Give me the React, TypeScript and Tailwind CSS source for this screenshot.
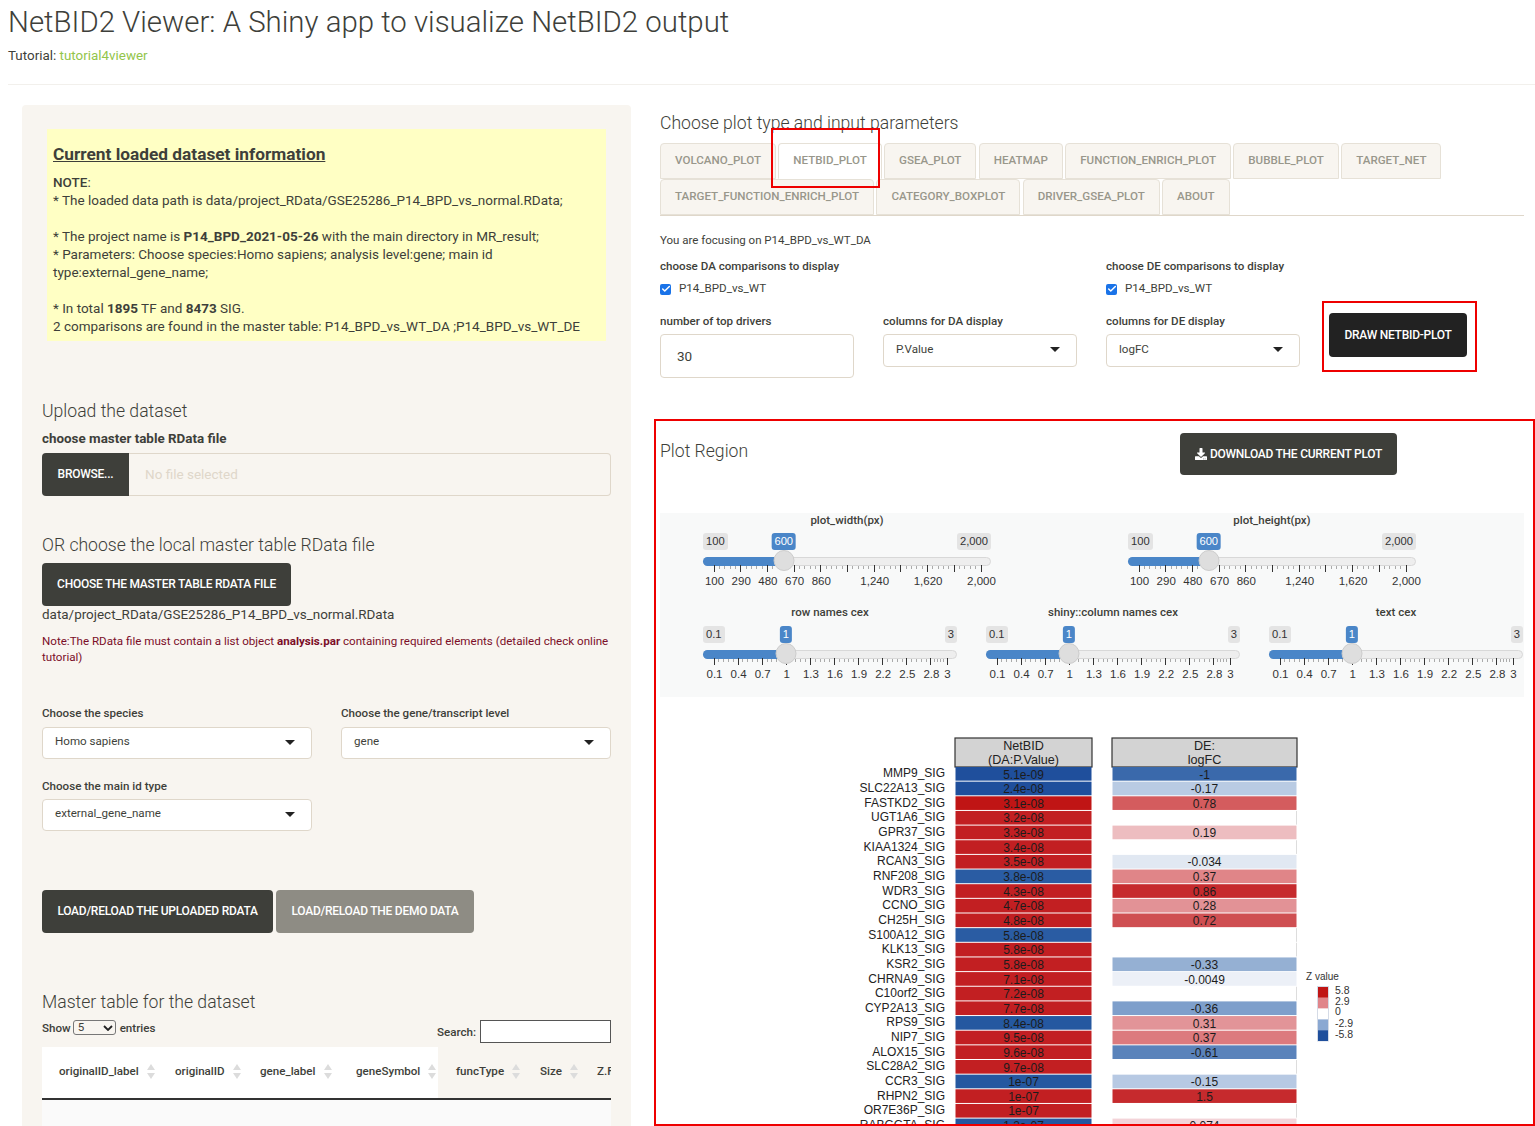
import { FaDownload } from 'react-icons/fa';
import { Check } from 'lucide-react';

const TABS = [
  'VOLCANO_PLOT', 'NETBID_PLOT', 'GSEA_PLOT', 'HEATMAP', 'FUNCTION_ENRICH_PLOT', 'BUBBLE_PLOT', 'TARGET_NET',
  'TARGET_FUNCTION_ENRICH_PLOT', 'CATEGORY_BOXPLOT', 'DRIVER_GSEA_PLOT', 'ABOUT',
];

const COLUMNS = [
  { name: 'originalID_label', w: 116 },
  { name: 'originalID', w: 85 },
  { name: 'gene_label', w: 96 },
  { name: 'geneSymbol', w: 100 },
  { name: 'funcType', w: 84 },
  { name: 'Size', w: 57 },
  { name: 'Z.FDR', w: 60 },
];

const BLUE = '#1f4f9c';
const RED = '#c21f22';

const ROWS: [string, string, string, string, string][] = [
  ['MMP9_SIG', '5.1e-09', BLUE, '-1', '#3a69ab'],
  ['SLC22A13_SIG', '2.4e-08', BLUE, '-0.17', '#b9cbe3'],
  ['FASTKD2_SIG', '3.1e-08', '#c01515', '0.78', '#d45c5e'],
  ['UGT1A6_SIG', '3.2e-08', RED, '', '#ffffff'],
  ['GPR37_SIG', '3.3e-08', RED, '0.19', '#edbdc0'],
  ['KIAA1324_SIG', '3.4e-08', RED, '', '#ffffff'],
  ['RCAN3_SIG', '3.5e-08', RED, '-0.034', '#e1e8f2'],
  ['RNF208_SIG', '3.8e-08', '#2a5ca3', '0.37', '#e08588'],
  ['WDR3_SIG', '4.3e-08', RED, '0.86', '#c62a2d'],
  ['CCNO_SIG', '4.7e-08', RED, '0.28', '#e29296'],
  ['CH25H_SIG', '4.8e-08', RED, '0.72', '#cf4f52'],
  ['S100A12_SIG', '5.8e-08', '#2a5ca3', '', '#ffffff'],
  ['KLK13_SIG', '5.8e-08', RED, '', '#ffffff'],
  ['KSR2_SIG', '5.8e-08', RED, '-0.33', '#95b0d3'],
  ['CHRNA9_SIG', '7.1e-08', RED, '-0.0049', '#ecf0f7'],
  ['C10orf2_SIG', '7.2e-08', RED, '', '#ffffff'],
  ['CYP2A13_SIG', '7.7e-08', RED, '-0.36', '#7e9fcb'],
  ['RPS9_SIG', '8.4e-08', '#2558a0', '0.31', '#e29498'],
  ['NIP7_SIG', '9.5e-08', RED, '0.37', '#dc7a7e'],
  ['ALOX15_SIG', '9.6e-08', RED, '-0.61', '#5a83bb'],
  ['SLC28A2_SIG', '9.7e-08', RED, '', '#ffffff'],
  ['CCR3_SIG', '1e-07', '#2558a0', '-0.15', '#b7c9e3'],
  ['RHPN2_SIG', '1e-07', RED, '1.5', '#c62a2d'],
  ['OR7E36P_SIG', '1e-07', RED, '', '#ffffff'],
  ['RABGGTA_SIG', '1.2e-07', '#2558a0', '0.074', '#f3d3d8'],
];

const LEGEND: [string, string, number][] = [
  ['#c01515', '5.8', 991],
  ['#e0858a', '2.9', 1002],
  ['#ffffff', '0', 1012],
  ['#8aa8d2', '-2.9', 1024],
  ['#1f4f9c', '-5.8', 1035],
];

function Caret() {
  return <span className="w-0 h-0 border-x-[5px] border-x-transparent border-t-[5px] border-t-[#222]" />;
}

function Select({ value, className }: { value: string; className: string }) {
  return (
    <div className={`flex items-center justify-between pl-[12px] pr-[16px] pb-[2px] bg-white border border-[#dfd7ca] rounded text-[11.6px] text-[#3e3f3a] ${className}`}>
      <span>{value}</span>
      <Caret />
    </div>
  );
}

function DarkButton({ label, className }: { label: string; className: string }) {
  return (
    <div className={`flex items-center justify-center rounded text-white text-[12px] font-medium tracking-[-0.25px] pb-px ${className}`}>
      {label}
    </div>
  );
}

function Tick({ pct, label, major }: { pct: number; label?: string; major: boolean }) {
  return (
    <>
      <span
        className={`absolute w-px ${major ? 'top-[32px] h-[7px] bg-[#333]' : 'top-[33px] h-[3px] bg-[#aaa]'}`}
        style={{ left: pct }}
      />
      {label && (
        <span className="absolute top-[42px] ml-px h-[12px] leading-[12px] -translate-x-1/2 text-[11.5px] text-[#333]" style={{ left: pct }}>
          {label}
        </span>
      )}
    </>
  );
}

function Slider({ width, min, max, value, valueLabel, minLabel, maxLabel, marks }: {
  width: number; min: number; max: number; value: number; valueLabel: string;
  minLabel: string; maxLabel: string; marks: { v: number; label?: string }[];
}) {
  const inner = width - 21;
  const pos = (v: number) => 10.5 + ((v - min) / (max - min)) * inner;
  const minors: number[] = [];
  marks.forEach((m, i) => {
    const next = marks[i + 1];
    if (!next) return;
    for (let k = 1; k < 5; k++) minors.push(pos(m.v) + ((pos(next.v) - pos(m.v)) * k) / 5);
  });
  return (
    <div className="relative h-[60px] [font-family:'Liberation_Sans',sans-serif]" style={{ width }}>
      <span className="absolute left-0 top-0 h-[17px] leading-[17px] px-[3px] rounded-[3px] bg-[#e4e4e4] text-[11.2px] text-[#333]">{minLabel}</span>
      <span className="absolute right-0 top-0 h-[17px] leading-[17px] px-[3px] rounded-[3px] bg-[#e4e4e4] text-[11.2px] text-[#333]">{maxLabel}</span>
      <span className="absolute top-0 h-[17px] leading-[17px] px-[3px] rounded-[3px] bg-[#4a86c8] text-[11.2px] text-white -translate-x-1/2" style={{ left: pos(value) }}>{valueLabel}</span>
      <div className="absolute left-0 right-0 top-[24px] h-[9px] rounded-full bg-[#eeeeee] border border-[#d8d8d8]" />
      <div className="absolute left-0 top-[24px] h-[9px] rounded-l-full bg-[#4a86c8]" style={{ width: pos(value) }} />
      {minors.map((p, i) => <Tick key={i} pct={p} major={false} />)}
      {marks.map(m => <Tick key={m.v} pct={pos(m.v)} label={m.label} major />)}
      <div className="absolute top-[17px] w-[21px] h-[21px] -translate-x-1/2 rounded-full bg-[#dedede] border border-[#cccccc]" style={{ left: pos(value) }} />
    </div>
  );
}

const PX_MARKS = [
  { v: 100, label: '100' }, { v: 290, label: '290' }, { v: 480, label: '480' }, { v: 670, label: '670' },
  { v: 860, label: '860' }, { v: 1050 }, { v: 1240, label: '1,240' }, { v: 1430 }, { v: 1620, label: '1,620' },
  { v: 1810 }, { v: 2000, label: '2,000' },
];

const CEX_MARKS = [0.1, 0.4, 0.7, 1, 1.3, 1.6, 1.9, 2.2, 2.5, 2.8, 3].map(v => ({ v, label: String(v) }));

function PxSlider({ title }: { title: string }) {
  return (
    <div className="w-[288px]">
      <div className="h-[14px] leading-[14px] text-center text-[11.5px] font-medium text-[#3e3f3a] mb-[6px]">{title}</div>
      <Slider width={288} min={100} max={2000} value={600} valueLabel="600" minLabel="100" maxLabel="2,000" marks={PX_MARKS} />
    </div>
  );
}

function CexSlider({ title }: { title: string }) {
  return (
    <div className="w-[254px]">
      <div className="h-[14px] leading-[14px] text-center text-[11.5px] font-medium text-[#3e3f3a] mb-[7px]">{title}</div>
      <Slider width={254} min={0.1} max={3} value={1} valueLabel="1" minLabel="0.1" maxLabel="3" marks={CEX_MARKS} />
    </div>
  );
}

function Checkbox({ label }: { label: string }) {
  return (
    <div className="mt-[6px] h-[18px] flex items-center gap-[8px] text-[11.6px] text-[#3e3f3a]">
      <span className="w-[11px] h-[11px] rounded-[2px] bg-[#1a73e8] flex items-center justify-center">
        <Check size={10} strokeWidth={3.5} color="white" />
      </span>
      {label}
    </div>
  );
}

function SortArrows() {
  return (
    <svg width="8" height="15" viewBox="0 0 8 15" className="shrink-0">
      <path d="M4 0L8 6H0Z" fill="#dcdcdc" />
      <path d="M4 15L8 9H0Z" fill="#dcdcdc" />
    </svg>
  );
}

function Heatmap() {
  const pitch = 14.65;
  const top = 767;
  return (
    <svg
      width="864"
      height="429"
      viewBox="660 697 864 429"
      className="block [font-family:'Liberation_Sans',sans-serif]"
    >
      <rect x="955" y="738" width="137" height="29" fill="#d3d3d3" stroke="#333" strokeWidth="1.2" />
      <text x="1023.5" y="750" textAnchor="middle" fontSize="12.6" fill="#222">NetBID</text>
      <text x="1023.5" y="764" textAnchor="middle" fontSize="12.6" fill="#222">(DA:P.Value)</text>
      <rect x="1112" y="738" width="185" height="29" fill="#d3d3d3" stroke="#333" strokeWidth="1.2" />
      <text x="1204.5" y="750" textAnchor="middle" fontSize="12.6" fill="#222">DE:</text>
      <text x="1204.5" y="764" textAnchor="middle" fontSize="12.6" fill="#222">logFC</text>
      {ROWS.map((r, i) => {
        const y = top + i * pitch;
        return (
          <g key={r[0]}>
            <text x="945" y={y + 10.4} textAnchor="end" fontSize="12" fill="#222">{r[0]}</text>
            <rect x="955.5" y={y} width="136" height={pitch - 1} fill={r[2]} />
            <text x="1023.5" y={y + 11.5} textAnchor="middle" fontSize="12" fill="#1c1c1c">{r[1]}</text>
            <rect x="1112.5" y={y} width="184" height={pitch - 1} fill={r[4]} />
            {!r[3] && <rect x="1296" y={y} width="1" height={pitch - 1} fill="#dddddd" />}
            {r[3] && <text x="1204.5" y={y + 11.5} textAnchor="middle" fontSize="12" fill="#1c1c1c">{r[3]}</text>}
          </g>
        );
      })}
      <text x="1306" y="980" fontSize="10" fill="#333">Z value</text>
      <rect x="1317.5" y="986.5" width="11" height="54.5" fill="none" stroke="#d5dbe6" />
      {LEGEND.map((l, i) => (
        <g key={l[1]}>
          <rect x="1318" y={987 + i * 10.8} width="10" height="10.8" fill={l[0]} />
          <text x="1335" y={l[2]} fontSize="10.5" dominantBaseline="middle" fill="#333">{l[1]}</text>
        </g>
      ))}
    </svg>
  );
}

export default function App() {
  return (
    <div className="relative h-[1126px] overflow-hidden bg-white [font-family:Roboto,sans-serif] text-[#3e3f3a]">
      <header className="pl-2">
        <h1 className="h-[44px] leading-[44px] text-[29.4px] font-light">NetBID2 Viewer: A Shiny app to visualize NetBID2 output</h1>
        <p className="mt-[3px] h-[18px] leading-[18px] text-[13.4px]">
          Tutorial: <span className="text-[#93c54b]">tutorial4viewer</span>
        </p>
        <div className="mt-[19px] h-px bg-[#f2f0ec]" />
      </header>

      <main className="flex mt-[20px] ml-[22px] gap-[29px] items-start">
        {/* left panel */}
        <aside className="w-[609px] h-[1040px] shrink-0 rounded bg-[#f8f5f0] pt-[24px] px-[20px] overflow-hidden">
          <div className="ml-[5px] w-[559px] h-[212px] bg-[#ffffc4] pl-[6px] pt-[14px] text-[13.5px] leading-[18px]">
            <h3 className="h-[22px] leading-[22px] text-[17.3px] font-bold underline">Current loaded dataset information</h3>
            <p className="mt-[8px]">
              <b className="font-medium">NOTE</b>:<br />
              * The loaded data path is data/project_RData/GSE25286_P14_BPD_vs_normal.RData;<br /><br />
              * The project name is <b className="font-bold">P14_BPD_2021-05-26</b> with the main directory in MR_result;<br />
              * Parameters: Choose species:Homo sapiens; analysis level:gene; main id<br />
              type:external_gene_name;<br /><br />
              * In total <b className="font-bold">1895</b> TF and <b className="font-bold">8473</b> SIG.<br />
              2 comparisons are found in the master table: P14_BPD_vs_WT_DA ;P14_BPD_vs_WT_DE
            </p>
          </div>

          <h4 className="mt-[58px] h-[22px] leading-[24px] text-[17.6px] font-light">Upload the dataset</h4>
          <div className="mt-[8px] h-[18px] leading-[20px] text-[13.4px] font-bold">choose master table RData file</div>
          <div className="mt-[6px] h-[43px] flex">
            <DarkButton label="BROWSE..." className="w-[87px] h-[43px] bg-[#3e3f3a] rounded-r-none" />
            <div className="flex-1 border border-l-0 border-[#dfd7ca] rounded-r flex items-center pl-[16px] text-[13.5px] text-[#dfd7ca]">No file selected</div>
          </div>

          <h4 className="mt-[37px] h-[22px] leading-[24px] text-[17.6px] font-light">OR choose the local master table RData file</h4>
          <DarkButton label="CHOOSE THE MASTER TABLE RDATA FILE" className="mt-[8px] w-[249px] h-[43px] bg-[#3e3f3a]" />
          <div className="h-[18px] leading-[18px] text-[13.45px]">data/project_RData/GSE25286_P14_BPD_vs_normal.RData</div>
          <p className="mt-[9px] text-[11.6px] leading-[16px] text-[#7b0e28]">
            Note:The RData file must contain a list object <b className="font-bold">analysis.par</b> containing required elements (detailed check online tutorial)
          </p>

          <div className="mt-[40px] flex gap-[29px]">
            <div className="w-[270px]">
              <div className="h-[16px] leading-[16px] text-[11.6px] font-medium">Choose the species</div>
              <Select value="Homo sapiens" className="mt-[6px] h-[32px]" />
            </div>
            <div className="w-[270px]">
              <div className="h-[16px] leading-[16px] text-[11.6px] font-medium">Choose the gene/transcript level</div>
              <Select value="gene" className="mt-[6px] h-[32px]" />
            </div>
          </div>
          <div className="mt-[19px] h-[16px] leading-[16px] text-[11.6px] font-medium">Choose the main id type</div>
          <Select value="external_gene_name" className="mt-[5px] w-[270px] h-[32px]" />

          <div className="mt-[59px] flex gap-[3px]">
            <DarkButton label="LOAD/RELOAD THE UPLOADED RDATA" className="w-[231px] h-[43px] bg-[#3e3f3a]" />
            <DarkButton label="LOAD/RELOAD THE DEMO DATA" className="w-[198px] h-[43px] bg-[#8e8c84]" />
          </div>

          <h4 className="mt-[58px] h-[22px] leading-[22px] text-[17.6px] font-light">Master table for the dataset</h4>
          <div className="mt-[4px] h-[30px] flex justify-between text-[11.6px] font-medium">
            <div className="flex items-start gap-[2px] pt-[2px]">
              <span className="leading-[18px]">Show</span>
              <span className="w-[43px] h-[15px] mt-[1px] border border-[#777] rounded-[3px] bg-[#f8f5f0] flex items-center justify-between pl-[4px] pr-[2px] font-normal">
                5
                <svg width="10" height="6" viewBox="0 0 10 6"><path d="M1 1l4 4 4-4" fill="none" stroke="#222" strokeWidth="1.8" /></svg>
              </span>
              <span className="leading-[18px] ml-[2px]">entries</span>
            </div>
            <div className="flex items-start gap-[4px] pt-[3px]">
              <span className="leading-[22px] mt-[1px]">Search:</span>
              <span className="w-[131px] h-[23px] border border-[#555] bg-white" />
            </div>
          </div>
          <div className="relative w-[569px] overflow-hidden">
            <div className="absolute left-0 top-0 w-[396px] h-[51px] bg-white" />
            <div className="relative flex h-[53px] border-b-2 border-[#333] pl-[17px] pb-[2px] whitespace-nowrap">
              {COLUMNS.map(c => (
                <div key={c.name} className="shrink-0 flex items-center gap-[8px] text-[11.6px] font-medium" style={{ width: c.w }}>
                  {c.name}
                  <SortArrows />
                </div>
              ))}
            </div>
            <div className="h-[40px] bg-[#fafafa]" />
          </div>
        </aside>

        {/* right column */}
        <section className="w-[864px] shrink-0 pt-[7px]">
          <h4 className="h-[22px] leading-[23px] text-[17.6px] font-light">Choose plot type and input parameters</h4>
          <nav className="mt-[9px] flex flex-wrap gap-x-[2.3px] border-b border-[#dfd7ca] h-[73px]">
            {TABS.map(t => (
              <div
                key={t}
                className={`h-[36px] leading-[33px] px-[14px] border border-[#e6e1d7] rounded-t text-[11.6px] font-medium ${t === 'NETBID_PLOT' ? 'bg-white border-b-white' : 'bg-[#f8f5f0]'} text-[#98978b]`}
              >
                {t}
              </div>
            ))}
          </nav>

          <div className="mt-[15px] h-[18px] leading-[18px] text-[11.5px]">You are focusing on P14_BPD_vs_WT_DA</div>
          <div className="mt-[9px] flex">
            <div className="w-[446px]">
              <div className="h-[16px] leading-[16px] text-[11.6px] font-medium">choose DA comparisons to display</div>
              <Checkbox label="P14_BPD_vs_WT" />
            </div>
            <div>
              <div className="h-[16px] leading-[16px] text-[11.6px] font-medium">choose DE comparisons to display</div>
              <Checkbox label="P14_BPD_vs_WT" />
            </div>
          </div>

          <div className="mt-[15px] flex gap-[29px] items-start">
            <div className="w-[194px]">
              <div className="h-[16px] leading-[16px] text-[11.6px] font-medium">number of top drivers</div>
              <div className="mt-[5px] h-[44px] flex items-center pl-[16px] pt-px border border-[#dfd7ca] rounded text-[13.5px]">30</div>
            </div>
            <div className="w-[194px]">
              <div className="h-[16px] leading-[16px] text-[11.6px] font-medium">columns for DA display</div>
              <Select value="P.Value" className="mt-[5px] h-[33px]" />
            </div>
            <div className="w-[194px]">
              <div className="h-[16px] leading-[16px] text-[11.6px] font-medium">columns for DE display</div>
              <Select value="logFC" className="mt-[5px] h-[33px]" />
            </div>
            <DarkButton label="DRAW NETBID-PLOT" className="w-[138px] h-[44px] bg-[#222222]" />
          </div>

          <div className="mt-[55px] h-[42px] flex items-start">
            <h4 className="w-[520px] mt-[7px] h-[22px] leading-[23px] text-[17.6px] font-light">Plot Region</h4>
            <div className="w-[217px] h-[42px] flex items-center justify-center gap-[3px] rounded bg-[#3e3f3a] text-white text-[12px] font-medium tracking-[-0.25px]">
              <FaDownload size={12} />
              DOWNLOAD THE CURRENT PLOT
            </div>
          </div>

          <div className="mt-[38px] h-[184px] bg-[#f8f9f9] pl-[43px]">
            <div className="flex gap-[137px]">
              <PxSlider title="plot_width(px)" />
              <PxSlider title="plot_height(px)" />
            </div>
            <div className="mt-[12px] flex gap-[29px]">
              <CexSlider title="row names cex" />
              <CexSlider title="shiny::column names cex" />
              <CexSlider title="text cex" />
            </div>
          </div>

          <Heatmap />
        </section>
      </main>

      {/* red annotation boxes */}
      <div className="absolute left-[771px] top-[128px] w-[109px] h-[60px] border-2 border-[#ee0000]" />
      <div className="absolute left-[1322px] top-[301px] w-[155px] h-[71px] border-2 border-[#ee0000]" />
      <div className="absolute left-[654px] top-[419px] w-[881px] h-[707px] border-2 border-[#ee0000]" />
    </div>
  );
}
